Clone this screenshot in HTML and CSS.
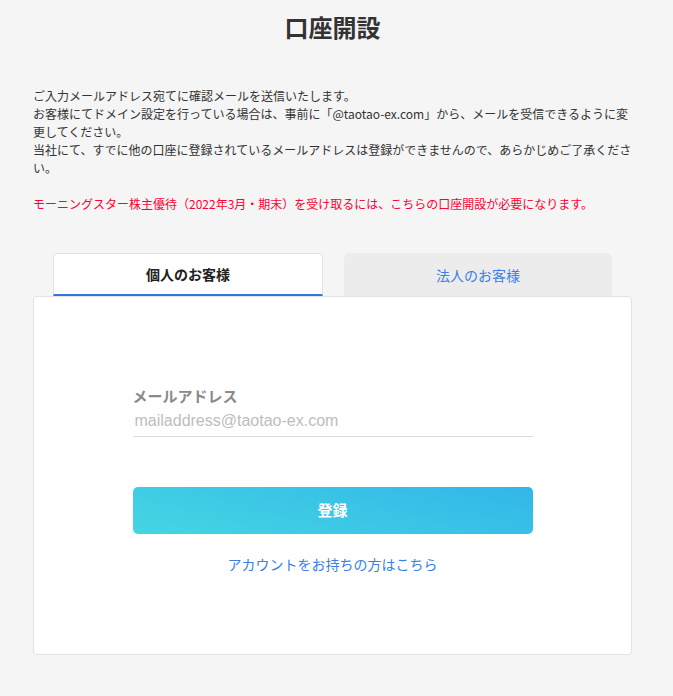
FILE: index.html
```html
<!DOCTYPE html>
<html lang="ja">
<head>
<meta charset="utf-8">
<title>口座開設</title>
<link rel="stylesheet" href="styles.css">
</head>
<body>
<main class="page">
  <h1 class="title">口座開設</h1>
  <div class="notice">
    <p>ご入力メールアドレス宛てに確認メールを送信いたします。<br>お客様にてドメイン設定を行っている場合は、事前に「@taotao-ex.com」から、メールを受信できるように変更してください。<br>当社にて、すでに他の口座に登録されているメールアドレスは登録ができませんので、あらかじめご了承ください。</p>
    <p class="red">モーニングスター株主優待（2022年3月・期末）を受け取るには、こちらの口座開設が必要になります。</p>
  </div>
  <div class="tabs">
    <div class="tab active">個人のお客様</div>
    <div class="tab">法人のお客様</div>
  </div>
  <section class="card">
    <form class="form">
      <label class="label" for="mail">メールアドレス</label>
      <input class="input" id="mail" type="email" placeholder="mailaddress@taotao-ex.com">
      <button class="btn" type="button">登録</button>
      <a class="link" href="#">アカウントをお持ちの方はこちら</a>
    </form>
  </section>
</main>
</body>
</html>
```
FILE: styles.css
```css
html, body {
  margin: 0;
  padding: 0;
  background: #f5f5f5;
}
body {
  font-family: "Noto Sans CJK JP", "Liberation Sans", sans-serif;
  color: #333;
}
.page {
  width: 599px;
  padding: 12px 0 40px 33px;
}
.title {
  margin: 0;
  font-size: 24px;
  line-height: 30px;
  font-weight: 700;
  text-align: center;
  color: #333;
}
.notice {
  margin-top: 45px;
  width: 601px;
  font-size: 12px;
  line-height: 18px;
}
.notice p {
  margin: 0;
}
.notice .red {
  margin-top: 18px;
  color: #ff0033;
}
.tabs {
  display: flex;
  gap: 21px;
  margin: 40px 20px 0;
  height: 43px;
}
.tab {
  flex: 1;
  display: flex;
  align-items: center;
  justify-content: center;
  font-size: 14px;
  color: #3a80e6;
  background: #ececec;
  border-radius: 6px 6px 0 0;
}
.tab.active {
  background: #fff;
  color: #222;
  font-weight: 700;
  border: 1px solid #e2e2e2;
  border-bottom: 2px solid #2f76e0;
  border-radius: 5px 5px 0 0;
  box-sizing: border-box;
}
.card {
  background: #fff;
  border: 1px solid #e2e2e2;
  border-radius: 4px;
  padding: 89px 0 80px;
  display: flex;
  justify-content: center;
}
.form {
  width: 400px;
  display: flex;
  flex-direction: column;
}
.label {
  font-size: 15px;
  line-height: 20px;
  font-weight: 700;
  color: #8a8a8a;
}
.input {
  border: none;
  border-bottom: 1px solid #dcdcdc;
  height: 30px;
  padding: 0 2px;
  font-family: "Liberation Sans", sans-serif;
  font-size: 16px;
  color: #333;
  background: transparent;
  outline: none;
}
.input::placeholder {
  color: #bdbdbd;
}
.btn {
  margin-top: 50px;
  height: 47px;
  border: none;
  border-radius: 5px;
  background: linear-gradient(15deg, #44d6e3 0%, #32b6e9 100%);
  color: #fff;
  font-family: "Noto Sans CJK JP", sans-serif;
  font-size: 15px;
  font-weight: 700;
  padding: 0 0 2px;
}
.link {
  margin-top: 20px;
  text-align: center;
  font-size: 14px;
  line-height: 20px;
  color: #3a80e6;
  text-decoration: none;
}
```
